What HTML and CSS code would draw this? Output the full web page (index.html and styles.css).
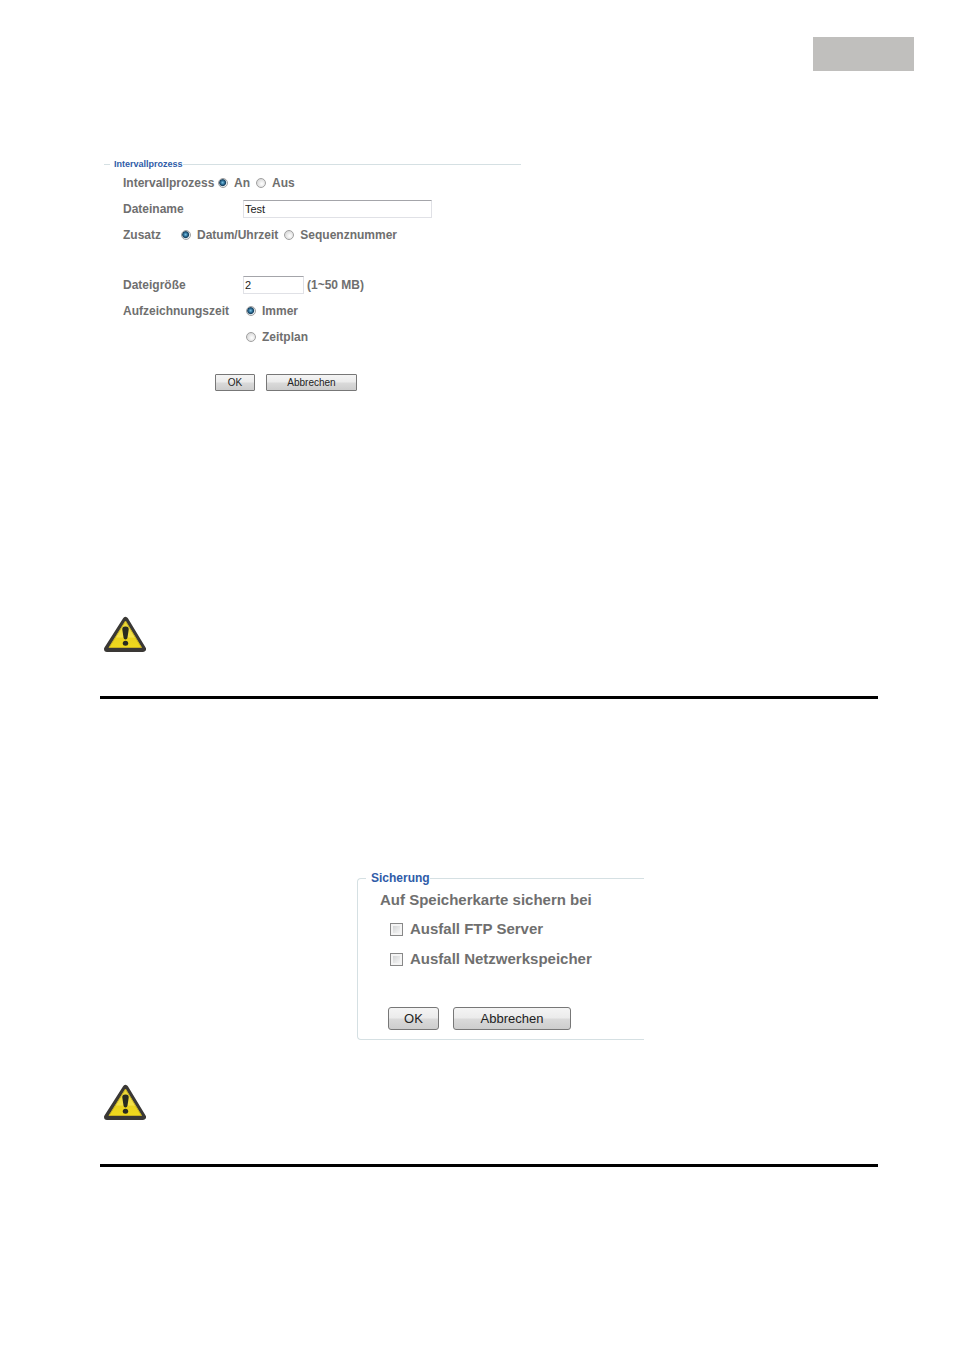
FILE: index.html
```html
<!DOCTYPE html>
<html lang="de">
<head>
    <meta charset="UTF-8">
    <meta name="viewport" content="width=device-width, initial-scale=1.0">
    <title>Intervallprozess</title>
    <link rel="stylesheet" href="styles.css">
</head>
<body>
    <header class="page-header">
        <div class="page-tab"></div>
    </header>

    <main class="content">
        <form class="interval-form">
            <fieldset>
                <legend>Intervallprozess</legend>
                <div class="row row-first" role="radiogroup" aria-labelledby="interval-label">
                    <span class="row-label" id="interval-label">Intervallprozess</span>
                    <label class="option"><input type="radio" name="interval" checked>An</label>
                    <label class="option"><input type="radio" name="interval">Aus</label>
                </div>
                <div class="row">
                    <label class="row-label" for="filename">Dateiname</label>
                    <input class="text-box name-box" type="text" id="filename" value="Test">
                </div>
                <div class="row row-suffix" role="radiogroup" aria-labelledby="suffix-label">
                    <span class="row-label" id="suffix-label">Zusatz</span>
                    <label class="option"><input type="radio" name="suffix" checked>Datum/Uhrzeit</label>
                    <label class="option"><input type="radio" name="suffix">Sequenznummer</label>
                </div>
                <div class="row row-size">
                    <label class="row-label" for="filesize">Dateigröße</label>
                    <input class="text-box size-box" type="text" id="filesize" value="2">
                    <span class="unit">(1~50 MB)</span>
                </div>
                <div class="row row-time" role="radiogroup" aria-labelledby="time-label">
                    <span class="row-label" id="time-label">Aufzeichnungszeit</span>
                    <div class="option-list">
                        <label class="option"><input type="radio" name="time" checked>Immer</label>
                        <label class="option"><input type="radio" name="time">Zeitplan</label>
                    </div>
                </div>
                <div class="buttons">
                    <button type="button" class="ok">OK</button>
                    <button type="button" class="cancel">Abbrechen</button>
                </div>
            </fieldset>
        </form>

        <section class="notice">
            <svg class="warning" viewBox="0 0 42 36" role="img" aria-label="Achtung">
                <defs>
                    <linearGradient id="yellow" x1="0" y1="0" x2="0" y2="1">
                        <stop offset="0" stop-color="#e8d230"/>
                        <stop offset="0.6" stop-color="#f5e24a"/>
                        <stop offset="0.65" stop-color="#ead220"/>
                        <stop offset="1" stop-color="#f0da1c"/>
                    </linearGradient>
                </defs>
                <path d="M21.500 4 L39 33 H3 Z" fill="#3a3835" stroke="#3a3835" stroke-width="6" stroke-linejoin="round"/>
                <path d="M21.500 5 L37.500 31.500 H5 Z" fill="url(#yellow)" stroke="#c9b222" stroke-width="1" stroke-linejoin="round"/>
                <path d="M21.500 10.500 C24 10.500 24.800 11.800 24.700 13.500 L23.500 21.500 C23.200 24 19.800 24 19.500 21.500 L18.300 13.500 C18.200 11.800 19 10.500 21.500 10.500 Z" fill="#292b20"/>
                <ellipse cx="21.500" cy="27.200" rx="2.700" ry="2.500" fill="#292b20"/>
            </svg>
        </section>

        <form class="backup-form">
            <fieldset>
                <legend>Sicherung</legend>
                <p class="backup-title">Auf Speicherkarte sichern bei</p>
                <label class="check"><input type="checkbox">Ausfall FTP Server</label>
                <label class="check"><input type="checkbox">Ausfall Netzwerkspeicher</label>
                <div class="buttons">
                    <button type="button" class="ok">OK</button>
                    <button type="button" class="cancel">Abbrechen</button>
                </div>
            </fieldset>
        </form>

        <section class="notice">
            <svg class="warning" viewBox="0 0 42 36" role="img" aria-label="Achtung">
                <path d="M21.500 4 L39 33 H3 Z" fill="#3a3835" stroke="#3a3835" stroke-width="6" stroke-linejoin="round"/>
                <path d="M21.500 5 L37.500 31.500 H5 Z" fill="url(#yellow)" stroke="#c9b222" stroke-width="1" stroke-linejoin="round"/>
                <path d="M21.500 10.500 C24 10.500 24.800 11.800 24.700 13.500 L23.500 21.500 C23.200 24 19.800 24 19.500 21.500 L18.300 13.500 C18.200 11.800 19 10.500 21.500 10.500 Z" fill="#292b20"/>
                <ellipse cx="21.500" cy="27.200" rx="2.700" ry="2.500" fill="#292b20"/>
            </svg>
        </section>
    </main>
</body>
</html>
```
FILE: styles.css
```css
* {
    box-sizing: border-box;
}

body {
    margin: 0;
    background-color: #fff;
    color: #6f6f6f;
    font-family: "Liberation Sans", Arial, sans-serif;
    font-size: 12px;
    font-weight: bold;
}

.page-header {
    display: flex;
    justify-content: flex-end;
    padding: 37px 40px 0;
}

.page-tab {
    width: 101px;
    height: 34px;
    background-color: #c0bfbd;
}

.content {
    padding: 88px 76px 40px 100px;
}

fieldset {
    min-width: 0;
    margin: 0;
    border: 0 solid #d5e0e3;
}

legend {
    color: #2f5ca8;
}

input,
button {
    margin: 0;
    font-family: inherit;
    color: #222;
}

/* Interval form */
.interval-form {
    max-width: 421px;
    padding-left: 4px;
}

.interval-form fieldset {
    padding: 0 0 0 6px;
    border-top-width: 1px;
}

.interval-form legend {
    padding: 0 0 0 4px;
    font-size: 9px;
    line-height: 11px;
}

.row {
    display: flex;
    align-items: center;
    min-height: 26px;
    padding-left: 13px;
}

.row-label {
    flex: 0 0 120px;
}

.row-first .row-label {
    flex-basis: 95px;
}

.row-suffix .row-label {
    flex-basis: 58px;
}

.option {
    display: flex;
    align-items: center;
    gap: 6px;
    margin-right: 6px;
}

.row-size {
    margin-top: 24px;
}

.unit {
    margin-left: 3px;
}

.row-time {
    align-items: flex-start;
    line-height: 26px;
}

.option-list {
    padding-left: 3px;
}

input[type="radio"] {
    appearance: none;
    width: 10px;
    height: 10px;
    border: 1px solid #a0a0a0;
    border-radius: 50%;
    background: radial-gradient(circle at 60% 60%, #fff, #ccc);
}

input[type="radio"]:checked {
    background: radial-gradient(circle at 45% 45%, #7cc4e6 0, #2a6a92 2px, #17405f 3px, #e8eef2 4px);
}

.text-box {
    height: 18px;
    padding: 0 1px;
    border: 1px solid #e0e1e6;
    border-top-color: #a4a5aa;
    background-color: #fff;
    font-size: 11px;
}

.name-box {
    width: 189px;
}

.size-box {
    width: 61px;
}

.buttons {
    display: flex;
}

button {
    padding: 0;
    border: 1px solid #777;
    border-radius: 2px;
    background: linear-gradient(#f4f4f4 0%, #ebebeb 48%, #dadada 52%, #cdcdcd 100%);
}

.interval-form .buttons {
    gap: 11px;
    padding: 24px 0 0 105px;
}

.interval-form button {
    height: 17px;
    border-radius: 1px;
    font-size: 10px;
}

.interval-form .ok {
    width: 40px;
}

.interval-form .cancel {
    width: 91px;
}

/* Notice with rule below */
.notice {
    padding: 0 4px 44px;
    border-bottom: 3px solid #000;
}

.interval-form + .notice {
    margin-top: 225px;
}

.backup-form + .notice {
    margin-top: 44px;
}

.warning {
    display: block;
    width: 42px;
    height: 36px;
}

/* Backup form */
.backup-form {
    max-width: 544px;
    margin-top: 172px;
    padding-left: 257px;
}

.backup-form fieldset {
    padding: 0 0 9px 8px;
    border-width: 1px 0 1px 1px;
    border-radius: 4px 0 0 4px;
}

.backup-form legend {
    padding: 0 0 0 5px;
    font-size: 12px;
    line-height: 14px;
}

.backup-title {
    margin: 0;
    padding-left: 14px;
    font-size: 15px;
    line-height: 29px;
}

.check {
    display: flex;
    align-items: center;
    gap: 7px;
    padding-left: 24px;
    font-size: 15px;
    line-height: 30px;
}

input[type="checkbox"] {
    appearance: none;
    width: 13px;
    height: 13px;
    border: 1px solid #888;
    background: linear-gradient(135deg, #c8cacb, #fff);
    box-shadow: inset 0 0 0 2px #f4f4f4;
}

.backup-form .buttons {
    gap: 14px;
    padding: 33px 0 0 22px;
}

.backup-form button {
    height: 23px;
    border-radius: 3px;
    font-size: 13px;
}

.backup-form .ok {
    width: 51px;
}

.backup-form .cancel {
    width: 118px;
}
```
